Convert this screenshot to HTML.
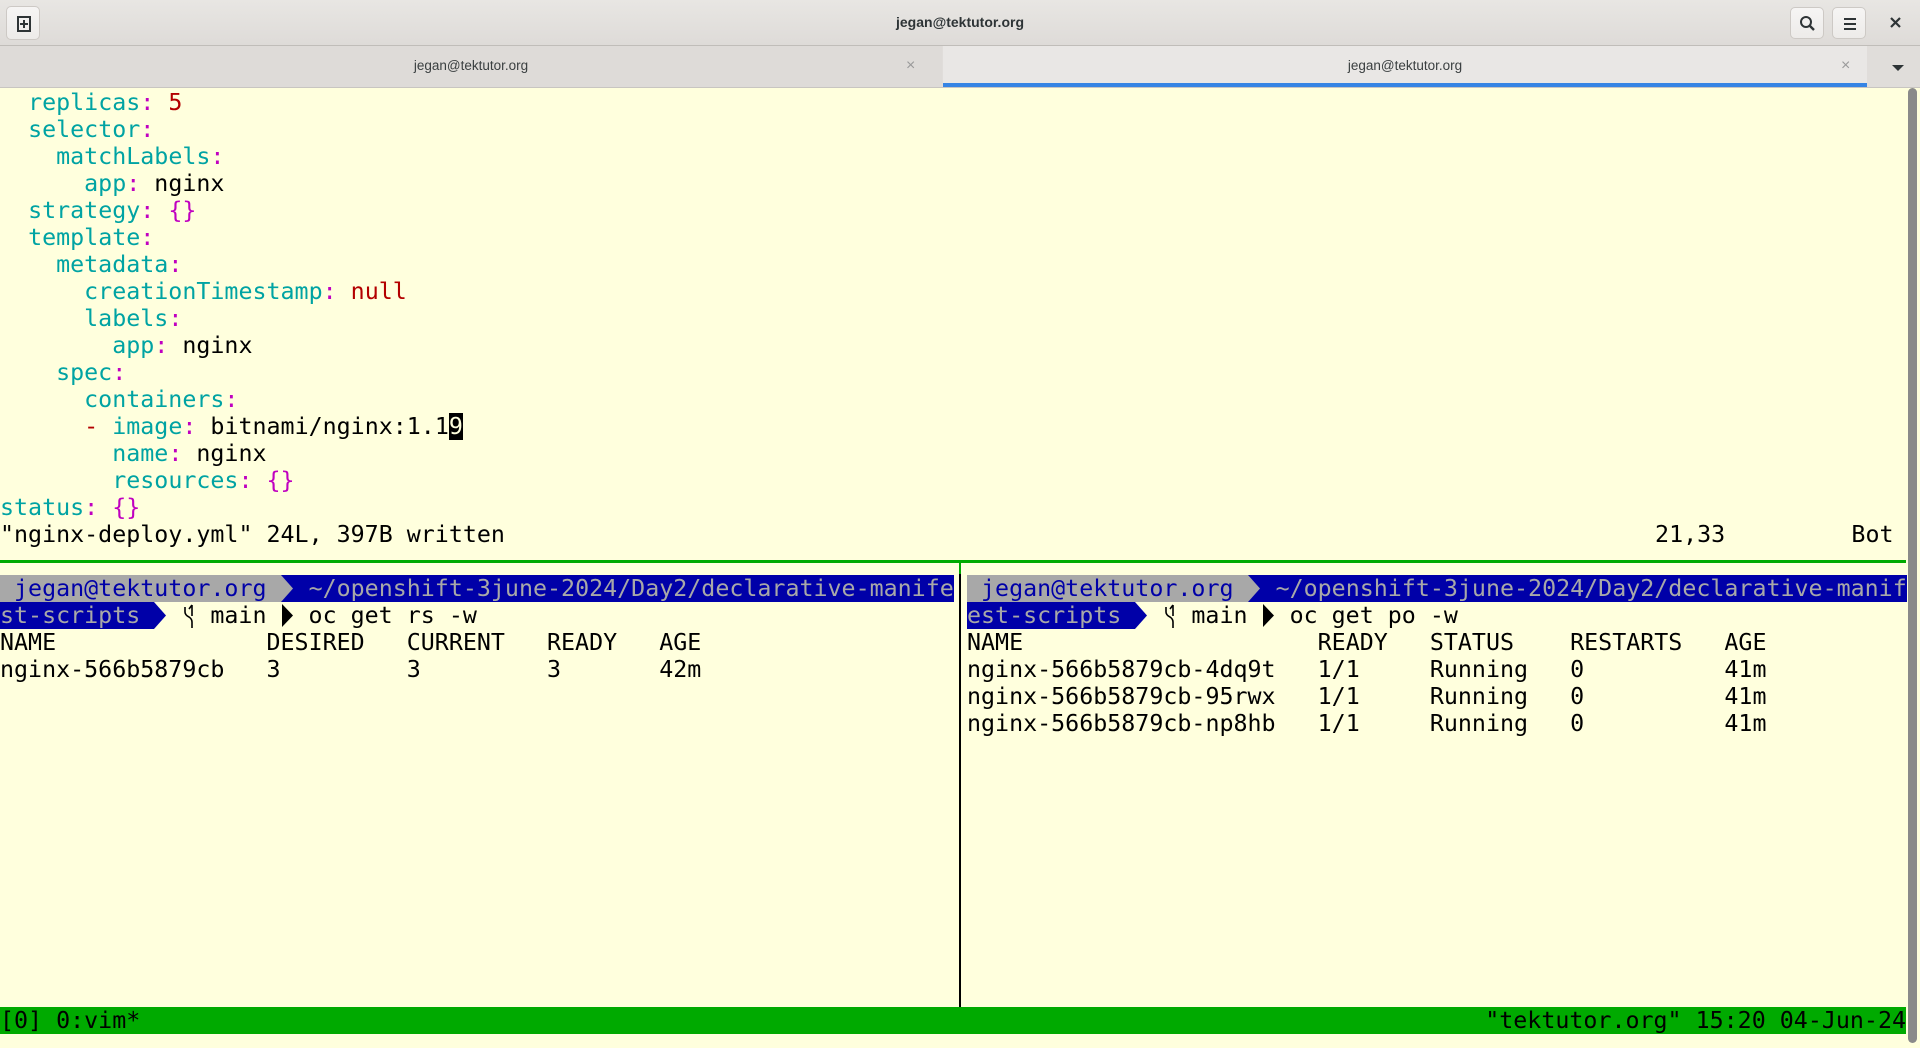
<!DOCTYPE html>
<html><head><meta charset="utf-8"><style>
*{margin:0;padding:0;box-sizing:border-box}
body{width:1920px;height:1048px;background:#ffffdd;position:relative;overflow:hidden;font-family:"Liberation Sans",sans-serif}
#title{position:absolute;left:0;top:0;width:1920px;height:46px;background:linear-gradient(#e8e6e3,#dedbd8);border-bottom:1px solid #c0bdb9}
#title .t{position:absolute;left:0;right:0;top:14px;text-align:center;font-weight:bold;font-size:14px;color:#2e3436}
.btn{position:absolute;top:7px;width:34px;height:32px;border:1px solid #cdc9c5;border-radius:5px;background:linear-gradient(#f6f5f4,#edebe9)}
#tabs{position:absolute;left:0;top:46px;width:1920px;height:42px;background:#e0ddda;border-bottom:1px solid #c8c5c1}
.tab{position:absolute;top:0;height:41px;font-size:13.5px;color:#3a3f40;text-align:center;line-height:40px}
.tab .x{position:absolute;font-size:16px;color:#9a9a9a;top:0}
pre{position:absolute;font-family:"DejaVu Sans Mono","Liberation Mono",monospace;font-size:23.3px;line-height:27px;color:#000;white-space:pre}
.c{color:#00a3a3}.m{color:#c000c0}.r{color:#b30000}
.g{background:#a8a8a8;color:#0000a8}.b{background:#0000a8;color:#a8a8a8}
.cur{background:#000;color:#ffffdd}
.ar{display:inline-block;width:14.03px;height:27px;vertical-align:top}
</style></head><body>
<div id="title">
 <div class="btn" style="left:6px;top:6px;width:34px;height:34px"><svg width="34" height="34"><rect x="11" y="10" width="12" height="14" fill="none" stroke="#2e3436" stroke-width="2"/><path d="M17 13v8M13 17h8" stroke="#2e3436" stroke-width="2"/></svg></div>
 <div class="t">jegan@tektutor.org</div>
 <div class="btn" style="left:1790px"><svg width="34" height="32"><circle cx="15" cy="14" r="5" fill="none" stroke="#2e3436" stroke-width="2"/><path d="M19 18l4 4" stroke="#2e3436" stroke-width="2.4"/></svg></div>
 <div class="btn" style="left:1832px"><svg width="34" height="32"><path d="M11 11h12M11 16h12M11 21h12" stroke="#2e3436" stroke-width="2"/></svg></div>
 <svg style="position:absolute;left:1888px;top:15px" width="16" height="16"><path d="M3 3l9 9M12 3l-9 9" stroke="#2e3436" stroke-width="2.2"/></svg>
</div>
<div id="tabs">
 <div class="tab" style="left:0;width:942px;background:#dedbd8">jegan@tektutor.org<span class="x" style="left:906px">×</span></div>
 <div class="tab" style="left:943px;width:924px;background:#e9e7e5;border-bottom:4px solid #3584e4">jegan@tektutor.org<span class="x" style="left:898px">×</span></div>
 <svg style="position:absolute;left:1890px;top:17px" width="16" height="10"><path d="M2 2h12l-6 6z" fill="#2e3436"/></svg>
</div>
<div style="position:absolute;left:1908px;top:88px;width:9px;height:955px;background:#8a8a8a;border-radius:5px"></div>
<pre style="left:0;top:89px">  <span class="c">replicas</span><span class="m">:</span> <span class="r">5</span>
  <span class="c">selector</span><span class="m">:</span>
    <span class="c">matchLabels</span><span class="m">:</span>
      <span class="c">app</span><span class="m">:</span> nginx
  <span class="c">strategy</span><span class="m">:</span> <span class="m">{}</span>
  <span class="c">template</span><span class="m">:</span>
    <span class="c">metadata</span><span class="m">:</span>
      <span class="c">creationTimestamp</span><span class="m">:</span> <span class="r">null</span>
      <span class="c">labels</span><span class="m">:</span>
        <span class="c">app</span><span class="m">:</span> nginx
    <span class="c">spec</span><span class="m">:</span>
      <span class="c">containers</span><span class="m">:</span>
      <span class="r">-</span> <span class="c">image</span><span class="m">:</span> bitnami/nginx:1.1<span class="cur">9</span>
        <span class="c">name</span><span class="m">:</span> nginx
        <span class="c">resources</span><span class="m">:</span> <span class="m">{}</span>
<span class="c">status</span><span class="m">:</span> <span class="m">{}</span>
"nginx-deploy.yml" 24L, 397B written                                                                                  21,33         Bot</pre>
<div style="position:absolute;left:0;top:560px;width:1906px;height:3px;background:#00aa00"></div>
<div style="position:absolute;left:959px;top:560px;width:2px;height:447px;background:#000"></div>
<div style="position:absolute;left:959px;top:560px;width:2px;height:14px;background:#00aa00"></div>
<pre style="left:0;top:575px"><span class="g"> jegan@tektutor.org </span><span class="ar"><svg width="14" height="27"><rect width="14" height="27" fill="#0000a8"/><path d="M0 0L12 13.5L0 27z" fill="#a8a8a8"/></svg></span><span class="b"> ~/openshift-3june-2024/Day2/declarative-manife</span>
<span class="b">st-scripts </span><span class="ar"><svg width="14" height="27"><path d="M0 0L12 13.5L0 27z" fill="#0000a8"/></svg></span> <span class="ar"><svg width="14" height="27"><path d="M3 5V10Q3 13 7 15Q10 17 10 20V26M10 3L7 7M10 3V14" fill="none" stroke="#000" stroke-width="1.6"/></svg></span> main <span class="ar"><svg width="14" height="27"><path d="M1 2L12 13.5L1 25z" fill="#000"/></svg></span> oc get rs -w
NAME               DESIRED   CURRENT   READY   AGE
nginx-566b5879cb   3         3         3       42m</pre>
<pre style="left:967px;top:575px"><span class="g"> jegan@tektutor.org </span><span class="ar"><svg width="14" height="27"><rect width="14" height="27" fill="#0000a8"/><path d="M0 0L12 13.5L0 27z" fill="#a8a8a8"/></svg></span><span class="b"> ~/openshift-3june-2024/Day2/declarative-manif</span>
<span class="b">est-scripts </span><span class="ar"><svg width="14" height="27"><path d="M0 0L12 13.5L0 27z" fill="#0000a8"/></svg></span> <span class="ar"><svg width="14" height="27"><path d="M3 5V10Q3 13 7 15Q10 17 10 20V26M10 3L7 7M10 3V14" fill="none" stroke="#000" stroke-width="1.6"/></svg></span> main <span class="ar"><svg width="14" height="27"><path d="M1 2L12 13.5L1 25z" fill="#000"/></svg></span> oc get po -w
NAME                     READY   STATUS    RESTARTS   AGE
nginx-566b5879cb-4dq9t   1/1     Running   0          41m
nginx-566b5879cb-95rwx   1/1     Running   0          41m
nginx-566b5879cb-np8hb   1/1     Running   0          41m</pre>
<div style="position:absolute;left:0;top:1007px;width:1906px;height:27px;background:#00aa00"></div>
<pre style="left:0;top:1007px">[0] 0:vim*</pre>
<pre style="right:14px;top:1007px">"tektutor.org" 15:20 04-Jun-24</pre>
</body></html>
